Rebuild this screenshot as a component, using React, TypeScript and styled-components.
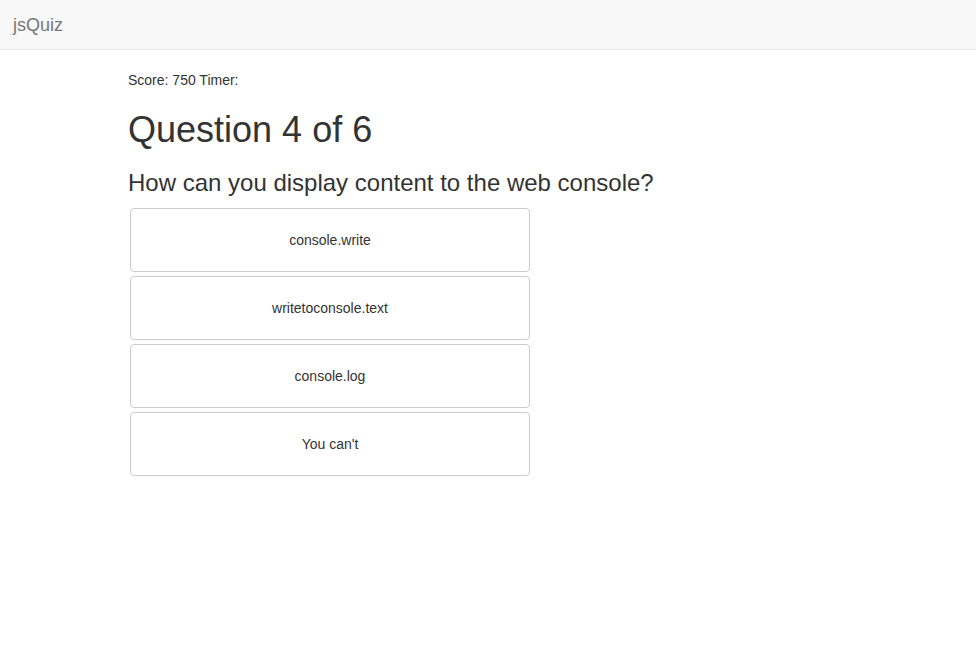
import styled, { createGlobalStyle } from 'styled-components'

const GlobalStyle = createGlobalStyle`
  * { box-sizing: border-box; }
  body {
    margin: 0;
    font-family: "Liberation Sans", Arial, sans-serif;
    font-size: 14px;
    line-height: 1.42857143;
    color: #333;
    background: #fff;
  }
`

const question = {
  number: 4,
  total: 6,
  text: 'How can you display content to the web console?',
  choices: ['console.write', 'writetoconsole.text', 'console.log', "You can't"],
}

export default function App() {
  return (
    <>
      <GlobalStyle />
      <Navbar>
        <Brand href="#">jsQuiz</Brand>
      </Navbar>
      <Container>
        <Status>Score: 750 Timer:</Status>
        <Title>
          Question {question.number} of {question.total}
        </Title>
        <Prompt>{question.text}</Prompt>
        <Choices>
          {question.choices.map((choice) => (
            <Choice key={choice} type="button">
              {choice}
            </Choice>
          ))}
        </Choices>
      </Container>
    </>
  )
}

const Navbar = styled.nav`
  display: flex;
  align-items: center;
  height: 50px;
  padding: 0 15px;
  background: #f8f8f8;
  border-bottom: 1px solid #e7e7e7;
  margin-bottom: 20px;
`

const Brand = styled.a`
  font-size: 18px;
  line-height: 20px;
  color: #777;
  text-decoration: none;
  margin-left: -2px;
`

const Container = styled.div`
  width: 750px;
  margin: 0 auto;
  padding: 0 15px;
`

const Status = styled.div`
  line-height: 20px;
`

const Title = styled.h1`
  font-size: 36px;
  font-weight: 500;
  line-height: 1.1;
  margin: 20px 0 10px;
`

const Prompt = styled.h3`
  font-size: 24px;
  font-weight: 500;
  line-height: 1.1;
  margin: 20px 0 10px;
`

const Choices = styled.div`
  display: flex;
  flex-direction: column;
  align-items: flex-start;
`

const Choice = styled.button`
  width: 400px;
  height: 64px;
  margin: 2px;
  padding: 0;
  background: #fff;
  border: 1px solid #ccc;
  border-radius: 4px;
  font-family: inherit;
  font-size: 14px;
  color: #333;
  cursor: pointer;
`
